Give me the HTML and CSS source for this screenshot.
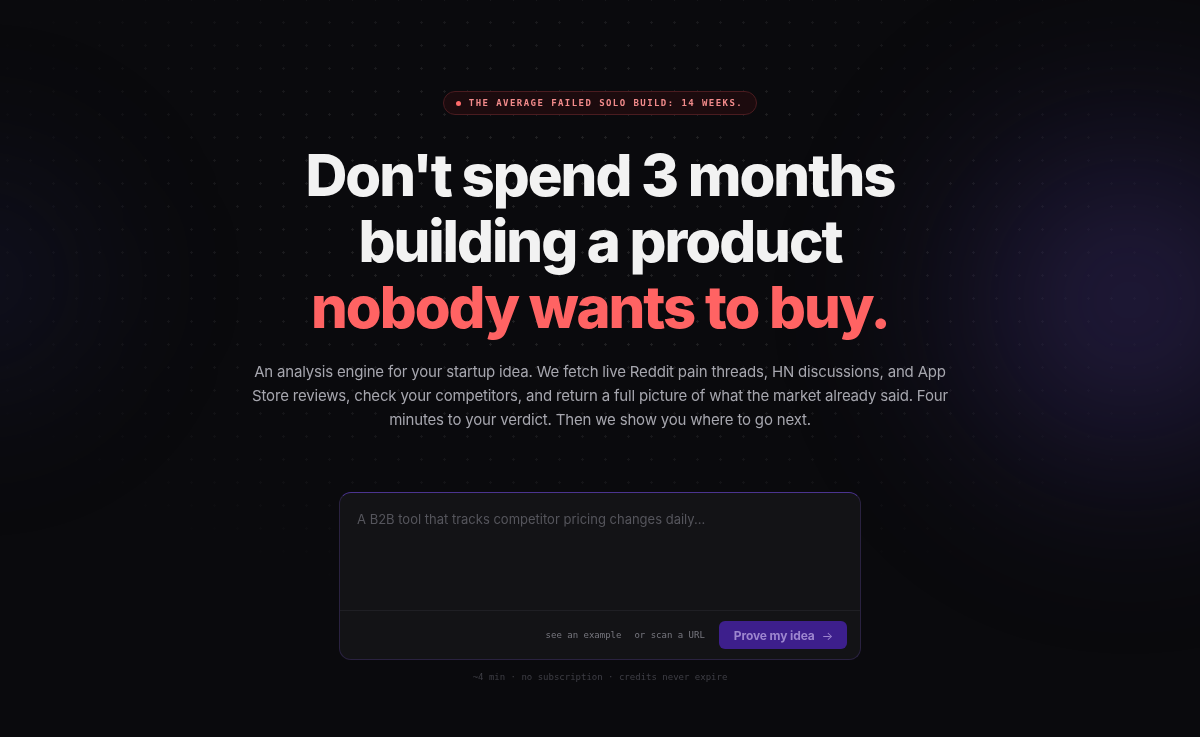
FILE: index.html
```html
<!DOCTYPE html>
<html lang="en">
<head>
    <meta charset="UTF-8">
    <meta name="viewport" content="width=device-width, initial-scale=1.0">
    <title>Prove your idea</title>
    <link rel="stylesheet" href="styles.css">
</head>
<body>
    <div class="backdrop">
        <div class="dots"></div>
        <div class="glow glow-right"></div>
        <div class="glow glow-left"></div>
    </div>

    <main class="hero">
        <div class="badge"><span class="badge-dot"></span>The average failed solo build: 14 weeks.</div>

        <h1 class="headline">
            Don't spend 3 months<br>
            building a product<br>
            <span class="accent">nobody wants to buy.</span>
        </h1>

        <p class="lead">An analysis engine for your startup idea. We fetch live Reddit pain threads, HN discussions, and App Store reviews, check your competitors, and return a full picture of what the market already said. Four minutes to your verdict. Then we show you where to go next.</p>

        <form class="idea-box">
            <textarea class="idea-input" placeholder="A B2B tool that tracks competitor pricing changes daily..."></textarea>
            <div class="idea-actions">
                <a href="#" class="text-link">see an example</a>
                <a href="#" class="text-link">or scan a URL</a>
                <button type="submit" class="prove-btn">Prove my idea <span class="arrow">&rarr;</span></button>
            </div>
        </form>

        <p class="fineprint">~4 min &middot; no subscription &middot; credits never expire</p>
    </main>
</body>
</html>
```

FILE: styles.css
```css
* {
    box-sizing: border-box;
}

html, body {
    margin: 0;
    padding: 0;
    height: 100%;
}

body {
    background-color: #0a0a0d;
    color: #f4f4f5;
    font-family: Inter, "Noto Sans", sans-serif;
    overflow: hidden;
}

/* background layers: dot grid and two soft glows */
.backdrop {
    position: fixed;
    inset: 0;
    pointer-events: none;
}

.dots {
    position: absolute;
    inset: 0;
    background-image: radial-gradient(circle, rgba(255, 255, 255, 0.09) 1px, transparent 1.2px);
    background-size: 23px 23px;
    background-position: 19px 11px;
    -webkit-mask-image: radial-gradient(ellipse 60% 55% at 50% 30%, #000 30%, transparent 100%);
    mask-image: radial-gradient(ellipse 60% 55% at 50% 30%, #000 30%, transparent 100%);
}

.glow {
    position: absolute;
    border-radius: 50%;
    filter: blur(60px);
}

.glow-right {
    width: 540px;
    height: 540px;
    left: 860px;
    top: 30px;
    background: radial-gradient(circle, rgba(78, 58, 145, 0.42) 0%, rgba(45, 34, 100, 0.18) 45%, transparent 70%);
}

.glow-left {
    width: 360px;
    height: 360px;
    left: -200px;
    top: 100px;
    background: radial-gradient(circle, rgba(40, 40, 100, 0.25) 0%, transparent 70%);
}

.hero {
    position: relative;
    display: flex;
    flex-direction: column;
    align-items: center;
    padding-top: 91px;
    text-align: center;
}

.badge {
    display: flex;
    align-items: center;
    gap: 8px;
    height: 24px;
    padding: 0 13px 0 12px;
    border: 1px solid #4a1c20;
    border-radius: 999px;
    background-color: #1c0b0e;
    color: #f28b8b;
    font-family: "DejaVu Sans Mono", monospace;
    font-size: 9px;
    font-weight: bold;
    letter-spacing: 0.16em;
    text-transform: uppercase;
}

.badge-dot {
    width: 5px;
    height: 5px;
    border-radius: 50%;
    background-color: #ff6b6b;
}

.headline {
    margin: 27px 0 0;
    font-family: Inter, sans-serif;
    font-size: 58px;
    font-weight: 800;
    line-height: 66px;
    letter-spacing: -0.035em;
    color: #f2f2f2;
}

.accent {
    color: #ff6363;
}

.lead {
    max-width: 720px;
    margin: 20px 0 0;
    font-size: 15px;
    line-height: 24px;
    letter-spacing: -0.012em;
    color: #a6a6ae;
}

.idea-box {
    width: 522px;
    margin-top: 60px;
    border: 1px solid #2a2240;
    border-top-color: #4b3490;
    border-radius: 12px;
    background-color: #131316;
    overflow: hidden;
}

.idea-input {
    display: block;
    width: 100%;
    height: 118px;
    padding: 18px 17px;
    border: none;
    border-bottom: 1px solid #1f1f24;
    outline: none;
    resize: none;
    background: transparent;
    color: #e4e4e7;
    font-family: Inter, sans-serif;
    font-size: 13px;
}

.idea-input::placeholder {
    color: #55555c;
}

.idea-actions {
    display: flex;
    align-items: center;
    justify-content: flex-end;
    gap: 13px;
    padding: 10px 13px 10px 0;
}

.text-link {
    color: #77777f;
    font-family: "DejaVu Sans Mono", monospace;
    font-size: 9px;
    text-decoration: none;
}

.prove-btn {
    display: flex;
    align-items: center;
    gap: 7px;
    height: 28px;
    margin-left: 1px;
    padding: 0 14px 0 15px;
    border: none;
    border-radius: 6px;
    background-color: #3d1f8c;
    color: #9d86cf;
    font-family: Inter, sans-serif;
    font-size: 12px;
    font-weight: 700;
    letter-spacing: -0.01em;
    cursor: pointer;
}

.arrow {
    font-weight: 400;
}

.fineprint {
    margin: 12px 0 0;
    color: #3f3f46;
    font-family: "DejaVu Sans Mono", monospace;
    font-size: 9px;
}
```
